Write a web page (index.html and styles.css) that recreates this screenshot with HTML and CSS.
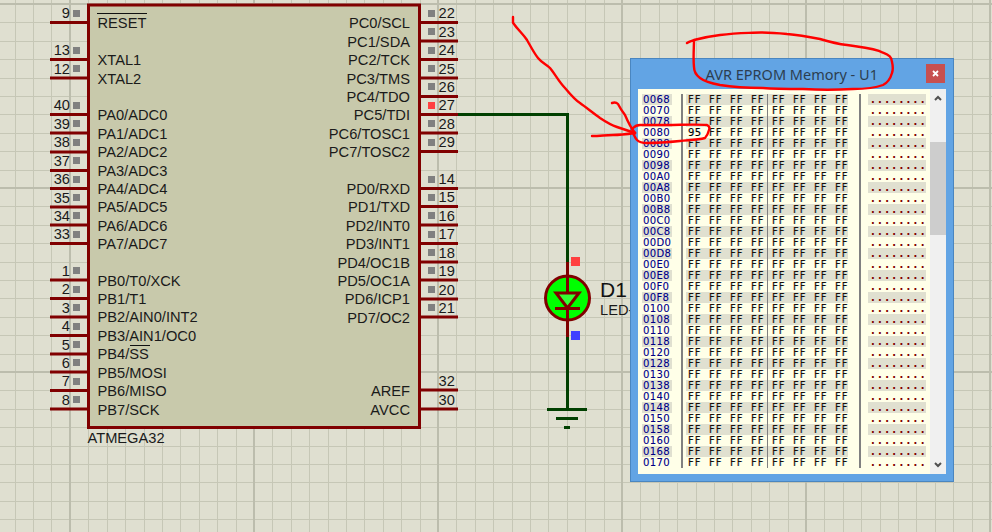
FILE: index.html
```html
<!DOCTYPE html>
<html lang="en">
<head>
<meta charset="utf-8">
<title>AVR EPROM Memory - U1</title>
<link rel="stylesheet" href="styles.css">
</head>
<body>
<main class="canvas">
  <svg class="sheet" width="992" height="532" viewBox="0 0 992 532">
    <path class="grid" d="M15.5 0V532M33.5 0V532M51.5 0V532M88.5 0V532M107.5 0V532M125.5 0V532M144.5 0V532M162.5 0V532M180.5 0V532M199.5 0V532M217.5 0V532M236.5 0V532M272.5 0V532M291.5 0V532M309.5 0V532M328.5 0V532M346.5 0V532M364.5 0V532M383.5 0V532M401.5 0V532M420.5 0V532M456.5 0V532M475.5 0V532M493.5 0V532M512.5 0V532M530.5 0V532M548.5 0V532M567.5 0V532M585.5 0V532M604.5 0V532M640.5 0V532M659.5 0V532M677.5 0V532M696.5 0V532M714.5 0V532M732.5 0V532M751.5 0V532M769.5 0V532M788.5 0V532M824.5 0V532M843.5 0V532M861.5 0V532M880.5 0V532M898.5 0V532M916.5 0V532M935.5 0V532M953.5 0V532M972.5 0V532M0 22.5H992M0 41.5H992M0 59.5H992M0 78.5H992M0 96.5H992M0 114.5H992M0 133.5H992M0 151.5H992M0 170.5H992M0 206.5H992M0 225.5H992M0 243.5H992M0 262.5H992M0 280.5H992M0 298.5H992M0 317.5H992M0 335.5H992M0 354.5H992M0 390.5H992M0 409.5H992M0 427.5H992M0 446.5H992M0 464.5H992M0 482.5H992M0 501.5H992M0 519.5H992"/>
    <path class="grid-major" d="M70 0V532M254 0V532M438 0V532M622 0V532M806 0V532M990 0V532M0 4H992M0 188H992M0 372H992"/>

    <!-- U1 body -->
    <rect class="chip" x="88.5" y="5" width="331" height="422.5"/>
    <path class="pin" d="M50 22.5H88M50 59.5H88M50 78H88M50 114.5H88M50 133H88M50 152H88M50 170.5H88M50 188.5H88M50 207H88M50 225H88M50 243.5H88M50 280H88M50 298.5H88M50 317H88M50 335.5H88M50 354H88M50 372H88M50 390.5H88M50 409H88"/>
    <path class="pin" d="M420 22.5H458M420 41H458M420 59.5H458M420 78H458M420 96.5H458M420 114.5H458M420 133H458M420 151.5H458M420 188.5H458M420 206.5H458M420 225H458M420 243.5H458M420 262H458M420 280H458M420 299H458M420 317H458M420 390H458M420 409H458"/>

    <g class="state">
      <rect x="73" y="10" width="7" height="7"/><rect x="73" y="47" width="7" height="7"/><rect x="73" y="65" width="7" height="7"/><rect x="73" y="102" width="7" height="7"/><rect x="73" y="120" width="7" height="7"/><rect x="73" y="139" width="7" height="7"/><rect x="73" y="157" width="7" height="7"/><rect x="73" y="176" width="7" height="7"/><rect x="73" y="194" width="7" height="7"/><rect x="73" y="212" width="7" height="7"/><rect x="73" y="231" width="7" height="7"/><rect x="73" y="267" width="7" height="7"/><rect x="73" y="286" width="7" height="7"/><rect x="73" y="304" width="7" height="7"/><rect x="73" y="323" width="7" height="7"/><rect x="73" y="341" width="7" height="7"/><rect x="73" y="359" width="7" height="7"/><rect x="73" y="378" width="7" height="7"/><rect x="73" y="396" width="7" height="7"/>
      <rect x="428" y="10" width="7" height="7"/><rect x="428" y="28" width="7" height="7"/><rect x="428" y="47" width="7" height="7"/><rect x="428" y="65" width="7" height="7"/><rect x="428" y="83" width="7" height="7"/><rect x="428" y="120" width="7" height="7"/><rect x="428" y="139" width="7" height="7"/>
      <rect x="428" y="176" width="7" height="7"/><rect x="428" y="194" width="7" height="7"/><rect x="428" y="212" width="7" height="7"/><rect x="428" y="231" width="7" height="7"/><rect x="428" y="249" width="7" height="7"/><rect x="428" y="267" width="7" height="7"/><rect x="428" y="286" width="7" height="7"/><rect x="428" y="304" width="7" height="7"/>
    </g>
    <rect class="state-high" x="428" y="102" width="7" height="7"/>

    <g class="num-left">
      <text x="70" y="18">9</text><text x="70" y="55">13</text><text x="70" y="74">12</text><text x="70" y="110">40</text><text x="70" y="129">39</text><text x="70" y="147">38</text><text x="70" y="166">37</text><text x="70" y="184">36</text><text x="70" y="203">35</text><text x="70" y="221">34</text><text x="70" y="239">33</text><text x="70" y="276">1</text><text x="70" y="294">2</text><text x="70" y="313">3</text><text x="70" y="331">4</text><text x="70" y="350">5</text><text x="70" y="368">6</text><text x="70" y="386">7</text><text x="70" y="405">8</text>
    </g>
    <g class="num-right">
      <text x="438.5" y="18">22</text><text x="438.5" y="37">23</text><text x="438.5" y="55">24</text><text x="438.5" y="74">25</text><text x="438.5" y="92">26</text><text x="438.5" y="110">27</text><text x="438.5" y="129">28</text><text x="438.5" y="147">29</text><text x="438.5" y="184">14</text><text x="438.5" y="202">15</text><text x="438.5" y="221">16</text><text x="438.5" y="239">17</text><text x="438.5" y="258">18</text><text x="438.5" y="276">19</text><text x="438.5" y="295">20</text><text x="438.5" y="313">21</text><text x="438.5" y="386">32</text><text x="438.5" y="405">30</text>
    </g>

    <g class="lab-left">
      <text x="97.5" y="28">RESET</text><text x="97.5" y="65">XTAL1</text><text x="97.5" y="84">XTAL2</text><text x="97.5" y="120">PA0/ADC0</text><text x="97.5" y="139">PA1/ADC1</text><text x="97.5" y="157">PA2/ADC2</text><text x="97.5" y="176">PA3/ADC3</text><text x="97.5" y="194">PA4/ADC4</text><text x="97.5" y="212">PA5/ADC5</text><text x="97.5" y="231">PA6/ADC6</text><text x="97.5" y="249">PA7/ADC7</text><text x="97.5" y="286">PB0/T0/XCK</text><text x="97.5" y="304">PB1/T1</text><text x="97.5" y="322">PB2/AIN0/INT2</text><text x="97.5" y="341">PB3/AIN1/OC0</text><text x="97.5" y="359">PB4/SS</text><text x="97.5" y="378">PB5/MOSI</text><text x="97.5" y="396">PB6/MISO</text><text x="97.5" y="415">PB7/SCK</text>
      <text x="87.5" y="443">ATMEGA32</text>
    </g>
    <g class="lab-right">
      <text x="410" y="28">PC0/SCL</text><text x="410" y="47">PC1/SDA</text><text x="410" y="65">PC2/TCK</text><text x="410" y="84">PC3/TMS</text><text x="410" y="102">PC4/TDO</text><text x="410" y="120">PC5/TDI</text><text x="410" y="139">PC6/TOSC1</text><text x="410" y="157">PC7/TOSC2</text><text x="410" y="194">PD0/RXD</text><text x="410" y="212">PD1/TXD</text><text x="410" y="231">PD2/INT0</text><text x="410" y="249">PD3/INT1</text><text x="410" y="268">PD4/OC1B</text><text x="410" y="286">PD5/OC1A</text><text x="410" y="304">PD6/ICP1</text><text x="410" y="323">PD7/OC2</text><text x="410" y="396">AREF</text><text x="410" y="415">AVCC</text>
    </g>
    <path class="overbar" d="M97 13.500H147M130 345.500H150"/>

    <!-- wires and ground -->
    <path class="wire" d="M458 114.5H567.5V262M567.5 337V409M547 409.5H587M556 418.5H578M564 427.5H570"/>

    <!-- D1 LED -->
    <path class="pin" d="M567.5 262V276M567.5 320V337"/>
    <circle class="led" cx="567.5" cy="298" r="22"/>
    <path class="led-tri" d="M556 293H579L567.5 308Z"/>
    <path class="pin" d="M567.5 276V293M555 308.5H580M567.5 308.5V320"/>
    <rect class="state-high" x="571" y="257" width="9" height="9"/>
    <rect class="state-low" x="571" y="331" width="9" height="9"/>
    <text class="ref" x="600" y="297">D1</text>
    <text class="val" x="600" y="315">LED-</text>
  </svg>

  <section class="window">
    <header class="titlebar">
      <h1 class="title">AVR EPROM Memory - U1</h1>
      <button class="close" type="button" aria-label="Close"><svg width="7" height="7" viewBox="0 0 7 7"><path d="M1 1L6 6M6 1L1 6"/></svg></button>
    </header>
    <div class="client">
      <div class="list">
        <div class="col addr">
          <div>0068</div><div>0070</div><div>0078</div><div>0080</div><div>0088</div><div>0090</div><div>0098</div><div>00A0</div><div>00A8</div><div>00B0</div><div>00B8</div><div>00C0</div><div>00C8</div><div>00D0</div><div>00D8</div><div>00E0</div><div>00E8</div><div>00F0</div><div>00F8</div><div>0100</div><div>0108</div><div>0110</div><div>0118</div><div>0120</div><div>0128</div><div>0130</div><div>0138</div><div>0140</div><div>0148</div><div>0150</div><div>0158</div><div>0160</div><div>0168</div><div>0170</div>
        </div>
        <div class="rule"></div>
        <div class="col hex">
          <div>FF FF FF FF FF FF FF FF</div>
          <div>FF FF FF FF FF FF FF FF</div>
          <div>FF FF FF FF FF FF FF FF</div>
          <div><span class="changed">95</span> FF FF FF FF FF FF FF</div>
          <div>FF FF FF FF FF FF FF FF</div>
          <div>FF FF FF FF FF FF FF FF</div>
          <div>FF FF FF FF FF FF FF FF</div>
          <div>FF FF FF FF FF FF FF FF</div>
          <div>FF FF FF FF FF FF FF FF</div>
          <div>FF FF FF FF FF FF FF FF</div>
          <div>FF FF FF FF FF FF FF FF</div>
          <div>FF FF FF FF FF FF FF FF</div>
          <div>FF FF FF FF FF FF FF FF</div>
          <div>FF FF FF FF FF FF FF FF</div>
          <div>FF FF FF FF FF FF FF FF</div>
          <div>FF FF FF FF FF FF FF FF</div>
          <div>FF FF FF FF FF FF FF FF</div>
          <div>FF FF FF FF FF FF FF FF</div>
          <div>FF FF FF FF FF FF FF FF</div>
          <div>FF FF FF FF FF FF FF FF</div>
          <div>FF FF FF FF FF FF FF FF</div>
          <div>FF FF FF FF FF FF FF FF</div>
          <div>FF FF FF FF FF FF FF FF</div>
          <div>FF FF FF FF FF FF FF FF</div>
          <div>FF FF FF FF FF FF FF FF</div>
          <div>FF FF FF FF FF FF FF FF</div>
          <div>FF FF FF FF FF FF FF FF</div>
          <div>FF FF FF FF FF FF FF FF</div>
          <div>FF FF FF FF FF FF FF FF</div>
          <div>FF FF FF FF FF FF FF FF</div>
          <div>FF FF FF FF FF FF FF FF</div>
          <div>FF FF FF FF FF FF FF FF</div>
          <div>FF FF FF FF FF FF FF FF</div>
          <div>FF FF FF FF FF FF FF FF</div>
        </div>
        <div class="rule rule-right"></div>
        <div class="col ascii">
          <div>........</div><div>........</div><div>........</div><div>........</div><div>........</div><div>........</div><div>........</div><div>........</div><div>........</div><div>........</div><div>........</div><div>........</div><div>........</div><div>........</div><div>........</div><div>........</div><div>........</div><div>........</div><div>........</div><div>........</div><div>........</div><div>........</div><div>........</div><div>........</div><div>........</div><div>........</div><div>........</div><div>........</div><div>........</div><div>........</div><div>........</div><div>........</div><div>........</div><div>........</div>
        </div>
      </div>
      <div class="scrollbar">
        <svg class="arrow" width="8" height="6" viewBox="0 0 8 6"><path d="M1 5L4 2L7 5"/></svg>
        <div class="track"><div class="thumb"></div></div>
        <svg class="arrow" width="8" height="6" viewBox="0 0 8 6"><path d="M1 1L4 4L7 1"/></svg>
      </div>
    </div>
  </section>

  <svg class="ink" width="992" height="532" viewBox="0 0 992 532">
    <path d="M687 43C690 41 692 41 694 40C705 37 712 36 720 35C735 33 745 33 753 32.700C765 32 777 33 787 34C800 35 810 37 820 39C830 42 838 44 847 45C860 47 875 48 883 52.700C889 55 892 57 892 62C893 66 893 70 892 73C890 80 887 83 883 85C875 88 865 89 853 89C835 90 820 90 803 89C790 89 775 89 763 88C750 88 732 87 720 85C710 83 704 81 700 78C696 75 694 71 694 67C693 58 694 48 694 40"/>
    <path d="M513 17V22.700C518 30 523 34 527 40C531 47 534 53 538 58C542 63 546 64 550 68C555 74 559 82 565 88C570 94 575 100 580 103C587 108 593 113 600 118C606 122 611 125 617 127C623 129 629 131 635 133"/>
    <path d="M612 103C615 102 617 103 618 104C620 108 622 111 625 115C628 122 631 128 635 133"/>
    <path d="M592 136C600 136 606 135 613 135C620 135 628 134 635 133"/>
    <path d="M635 133C632 131 632 129 633 128C635 126 637 125 640 125C650 125 658 125 667 125C680 125 695 124 707 125C709 126 710 128 709 130C708 134 707 136 705 138C698 140 690 140 680 141C670 142 658 143 647 143C642 143 639 142 637 140C635 138 634 135 633 133"/>
  </svg>
</main>
</body>
</html>
```

FILE: styles.css
```css
* { box-sizing: border-box; }

html, body {
  margin: 0;
  padding: 0;
  background: #dfdfd0;
}

.canvas {
  position: relative;
  width: 992px;
  height: 532px;
  overflow: hidden;
  font-family: "Liberation Sans", Arial, sans-serif;
}

.sheet, .ink {
  position: absolute;
  left: 0;
  top: 0;
}

.ink { pointer-events: none; }
.ink path {
  fill: none;
  stroke: #ff0000;
  stroke-width: 2.400;
  stroke-linecap: round;
  stroke-linejoin: round;
}

.grid { fill: none; stroke: #c6c7b6; stroke-width: 1; }
.grid-major { fill: none; stroke: #bcbdad; stroke-width: 2; }

.chip { fill: #c8c9ab; stroke: #800000; stroke-width: 3; }
.pin { fill: none; stroke: #800000; stroke-width: 3; }
.wire { fill: none; stroke: #004000; stroke-width: 3; }
.overbar { fill: none; stroke: #101010; stroke-width: 1; }

.state rect { fill: #808080; }
.state-high { fill: #ff4040; }
.state-low { fill: #4040ff; }

.num-left text, .num-right text, .lab-left text, .lab-right text, .val {
  font-size: 14.67px;
  fill: #1a1a1a;
}
.num-left text { text-anchor: end; }
.lab-right text { text-anchor: end; }

.led { fill: #00ff00; stroke: #800000; stroke-width: 3; }
.led-tri { fill: #33ff33; stroke: #800000; stroke-width: 3; stroke-linejoin: miter; }
.ref { font-size: 21px; fill: #111; }

/* Memory window */
.window {
  position: absolute;
  left: 630px;
  top: 58px;
  width: 323.500px;
  height: 424px;
  display: flex;
  flex-direction: column;
  padding: 0 7px 7px;
  background: #62a4e4;
  border: 1px solid #4a86c0;
}

.titlebar {
  position: relative;
  height: 30px;
  flex: none;
  display: flex;
  align-items: center;
  justify-content: center;
}

.title {
  margin: 0;
  font: 400 14.500px "Noto Sans", "Open Sans", sans-serif;
  color: #2c3e50;
}

.close {
  position: absolute;
  right: 1px;
  top: 5px;
  width: 19px;
  height: 19px;
  padding: 0;
  border: 0;
  background: #c75050;
  display: flex;
  align-items: center;
  justify-content: center;
}
.close path { fill: none; stroke: #fff; stroke-width: 1.800; }

.client {
  flex: 1;
  display: flex;
  justify-content: space-between;
  background: #ffffe8;
}

.list {
  display: flex;
  align-self: flex-start;
  padding: 5px 0 0 4px;
  font: 10px/11px "DejaVu Sans", sans-serif;
}

.col > div { height: 11px; white-space: pre; }
.col > div:nth-child(odd) { background: #e0e0d0; }

.addr {
  width: 30px;
  color: #000080;
  letter-spacing: 0.350px;
  text-shadow: 0.400px 0 rgba(80, 80, 255, 0.350);
}
.addr > div { padding-left: 1px; }

.rule { width: 2px; margin: 0 3px 0 9px; background: #808080; }
.rule-right { margin: 0 7px 0 11px; }

.hex {
  position: relative;
  width: 162px;
  color: #1a1008;
  letter-spacing: 1px;
  word-spacing: 3.320px;
  text-shadow: 0.500px 0 rgba(0, 190, 255, 0.400), -0.400px 0 rgba(255, 90, 0, 0.300);
}
.hex > div { padding-left: 2px; }
.hex::after {
  content: "";
  position: absolute;
  left: 81px;
  top: 0;
  bottom: 0;
  width: 1px;
  background: #808080;
}
.changed { color: #000; letter-spacing: 0.390px; }

.ascii {
  width: 58px;
  color: #800000;
  font-weight: 700;
  letter-spacing: 3.300px;
}
.ascii > div { padding-left: 3px; }

.scrollbar {
  width: 16px;
  flex: none;
  display: flex;
  flex-direction: column;
  align-items: center;
  background: #f0f0f0;
}

.arrow { flex: none; margin: 6px 0; }
.arrow path { fill: none; stroke: #505050; stroke-width: 2; }

.track { flex: 1; width: 100%; padding-top: 35px; }
.thumb { height: 93px; background: #cdcdcd; }
```
